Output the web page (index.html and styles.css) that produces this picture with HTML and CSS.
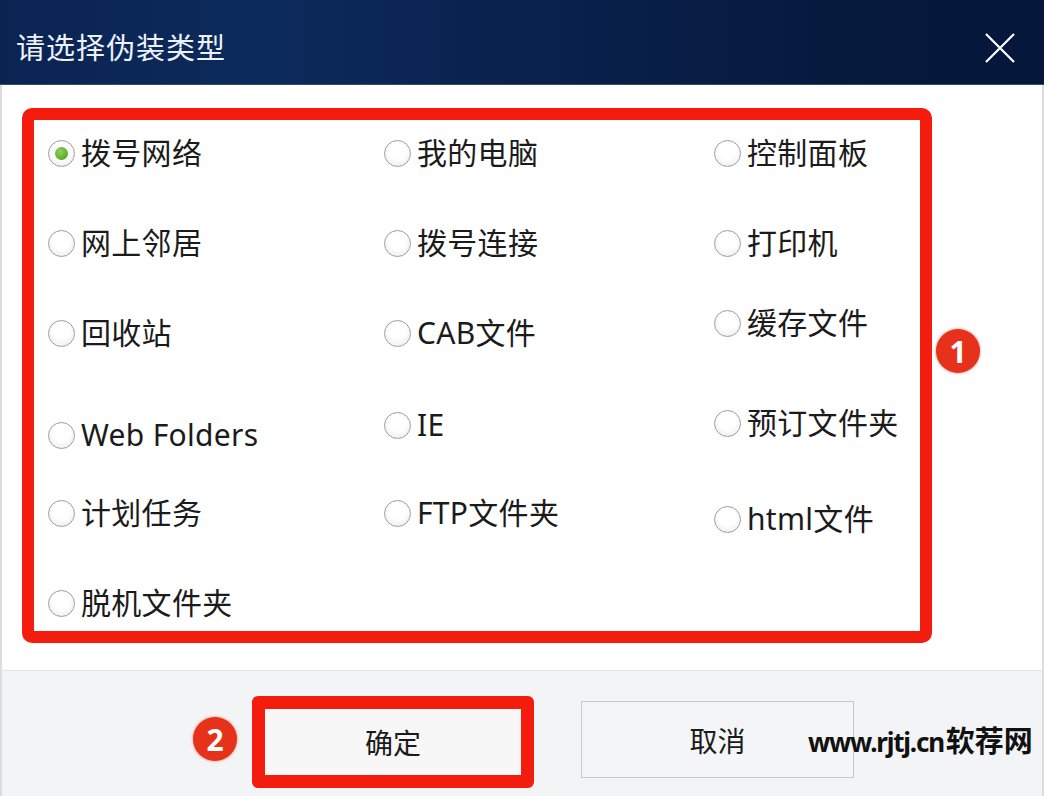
FILE: index.html
```html
<!DOCTYPE html>
<html lang="zh-CN">
<head>
  <meta charset="UTF-8" />
  <meta name="viewport" content="width=device-width, initial-scale=1.0"/>
  <title>请选择伪装类型</title>
  <link rel="stylesheet" href="styles.css">
</head>
<body>
  <div class="dialog">
    <div class="titlebar">
      <span class="title">请选择伪装类型</span>
      <svg class="close" width="30" height="30" viewBox="0 0 30 30">
        <path d="M1 1 L29 29 M29 1 L1 29" stroke="#ffffff" stroke-width="2.2" fill="none"/>
      </svg>
    </div>

    <div class="content">
      <div class="mark-box">
        <div class="options">
          <label class="option"><span class="radio checked"></span>拨号网络</label>
          <label class="option"><span class="radio"></span>我的电脑</label>
          <label class="option"><span class="radio"></span>控制面板</label>

          <label class="option"><span class="radio"></span>网上邻居</label>
          <label class="option"><span class="radio"></span>拨号连接</label>
          <label class="option"><span class="radio"></span>打印机</label>

          <label class="option"><span class="radio"></span>回收站</label>
          <label class="option"><span class="radio"></span>CAB文件</label>
          <label class="option up10"><span class="radio"></span>缓存文件</label>

          <label class="option down12"><span class="radio"></span>Web Folders</label>
          <label class="option down2"><span class="radio"></span>IE</label>
          <label class="option"><span class="radio"></span>预订文件夹</label>

          <label class="option"><span class="radio"></span>计划任务</label>
          <label class="option"><span class="radio"></span>FTP文件夹</label>
          <label class="option down6"><span class="radio"></span>html文件</label>

          <label class="option"><span class="radio"></span>脱机文件夹</label>
        </div>
      </div>
      <span class="badge badge-one">1</span>
    </div>

    <div class="footer">
      <span class="badge">2</span>
      <button class="btn btn-marked">确定</button>
      <button class="btn">取消</button>
      <span class="watermark"><span class="wm-url">www.rjtj.cn</span><span class="wm-name">软荐网</span></span>
    </div>
  </div>
</body>
</html>
```

FILE: styles.css
```css
body {
  margin: 0;
  font-family: "Noto Sans", "Noto Sans CJK SC", sans-serif;
  background: #ffffff;
}

.dialog {
  width: 1044px;
  height: 796px;
  display: flex;
  flex-direction: column;
  overflow: hidden;
}

.titlebar {
  height: 85px;
  flex: none;
  display: flex;
  align-items: center;
  justify-content: space-between;
  padding: 0 28px 0 16px;
  background: linear-gradient(90deg, #0a2452 0%, #0c2a5c 25%, #08204a 55%, #061a3e 80%, #05173a 100%);
  border-bottom: 1px solid #3b4c6a;
  box-sizing: border-box;
}

.title {
  color: #eef2f8;
  font-size: 29px;
  letter-spacing: 1px;
  margin-top: 8px;
}

.close {
  margin-top: 12px;
  margin-right: 1px;
}

.content {
  position: relative;
  height: 585px;
  flex: none;
  padding: 23px 0 0 22px;
  box-sizing: border-box;
  background: #ffffff;
  border-left: 2px solid #dcdcdc;
  border-right: 2px solid #dcdcdc;
}

.mark-box {
  width: 910px;
  height: 535px;
  margin-left: -2px;
  box-sizing: border-box;
  border: 12px solid #f41c0d;
  border-radius: 10px;
  background: #ffffff;
}

.options {
  display: grid;
  grid-template-columns: 336px 330px 1fr;
  grid-auto-rows: 40px;
  row-gap: 50px;
  padding: 13px 0 0 14px;
}

.option {
  display: flex;
  align-items: center;
  gap: 6px;
  height: 40px;
  font-size: 30px;
  letter-spacing: 0.3px;
  line-height: 1;
  color: #1b1b1b;
  white-space: nowrap;
}

.up10 { margin-top: -10px; }
.down2 { margin-top: 2px; }
.down6 { margin-top: 6px; }
.down12 { margin-top: 12px; }

.radio {
  width: 27px;
  height: 27px;
  flex: none;
  box-sizing: border-box;
  border: 1.5px solid #9e9e9e;
  border-radius: 50%;
  background: radial-gradient(circle at 50% 40%, #ffffff 40%, #e8e8e8 100%);
  display: flex;
  align-items: center;
  justify-content: center;
}

.radio.checked::after {
  content: "";
  width: 13px;
  height: 13px;
  border-radius: 50%;
  background: radial-gradient(circle at 40% 35%, #8fd45a 0%, #57ad24 70%, #3f8e18 100%);
}

.badge {
  width: 44px;
  height: 44px;
  border-radius: 50%;
  background: #e6321b;
  color: #ffffff;
  font-weight: bold;
  font-size: 30px;
  display: flex;
  align-items: center;
  justify-content: center;
  box-shadow: 0 0 3px rgba(230, 50, 27, 0.6);
  flex: none;
}

.badge-one {
  position: absolute;
  left: 934px;
  top: 244px;
}

.footer {
  flex: 1;
  position: relative;
  display: flex;
  align-items: flex-start;
  padding: 25px 0 0 191px;
  background: #f3f4f6;
  border-top: 1px solid #e4e4e4;
  border-left: 2px solid #dcdcdc;
  border-right: 2px solid #dcdcdc;
}

.footer .badge {
  margin-top: 21px;
  margin-right: 15px;
}

.btn {
  width: 273px;
  height: 77px;
  margin-top: 5px;
  margin-left: 47px;
  border: 1.5px solid #c9c9c9;
  background: #f4f5f7;
  font-family: "Noto Sans CJK SC", sans-serif;
  font-size: 28px;
  color: #1b1b1b;
  padding: 0;
}

.btn-marked {
  width: 282px;
  height: 92px;
  margin: 0;
  border: 13px solid #f41c0d;
  border-radius: 6px;
  background: #f7f7f8;
}

.watermark {
  position: absolute;
  left: 806px;
  top: 47px;
  white-space: nowrap;
  font-weight: bold;
  color: #111111;
  display: flex;
  align-items: baseline;
}

.wm-url {
  font-family: "Noto Sans", sans-serif;
  font-size: 26px;
  letter-spacing: -1.2px;
}

.wm-name {
  font-family: "Noto Sans CJK SC", sans-serif;
  font-size: 29px;
  margin-left: 2px;
}
```
